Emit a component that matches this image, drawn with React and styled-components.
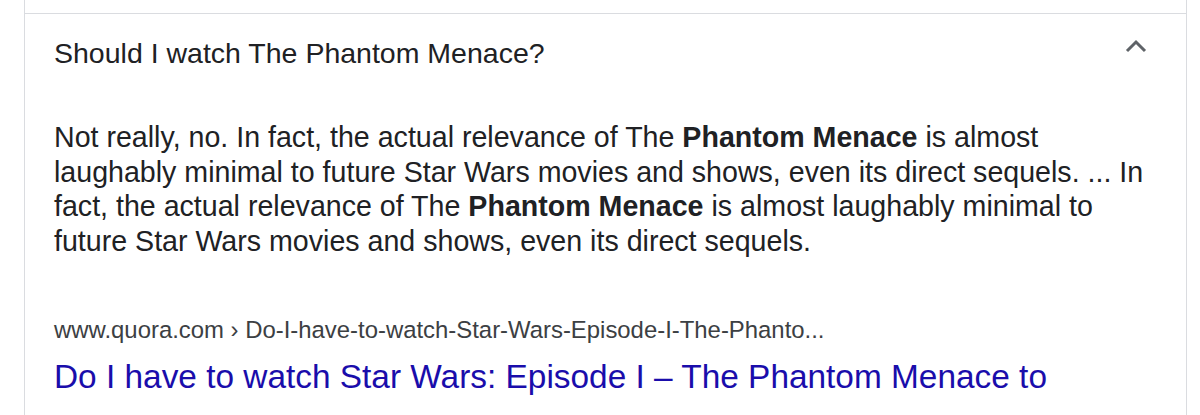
import React from 'react'
import styled, { createGlobalStyle } from 'styled-components'

const GlobalStyle = createGlobalStyle`
  body {
    margin: 0;
    background: #fff;
    font-family: 'Liberation Sans', Arial, sans-serif;
  }
`

function Chevron() {
  return (
    <ChevronIcon width="22" height="14" viewBox="0 0 22 14" aria-hidden="true">
      <polyline points="2,12 11,3 20,12" fill="none" stroke="#5f6368" strokeWidth="3" />
    </ChevronIcon>
  )
}

function App() {
  return (
    <Page>
      <GlobalStyle />
      <Card>
        <PrevItem />
        <Item>
          <QuestionRow>
            <Question>Should I watch The Phantom Menace?</Question>
            <Chevron />
          </QuestionRow>
          <Answer>
            Not really, no. In fact, the actual relevance of The <Strong>Phantom Menace</Strong> is almost
            laughably minimal to future Star Wars movies and shows, even its direct sequels. ... In
            fact, the actual relevance of The <Strong>Phantom Menace</Strong> is almost laughably minimal to
            future Star Wars movies and shows, even its direct sequels.
          </Answer>
          <Source>
            <Cite>www.quora.com › Do-I-have-to-watch-Star-Wars-Episode-I-The-Phanto...</Cite>
            <Title href="#">Do I have to watch Star Wars: Episode I – The Phantom Menace to</Title>
          </Source>
        </Item>
      </Card>
    </Page>
  )
}

const Page = styled.div`
  height: 415px;
  overflow: hidden;
  padding: 0 13px 0 24px;
`

const Card = styled.div`
  border-left: 1px solid #dadce0;
  border-right: 1px solid #dadce0;
  height: 100%;
`

const PrevItem = styled.div`
  height: 13px;
`

const Item = styled.div`
  border-top: 1px solid #dadce0;
`

const QuestionRow = styled.div`
  display: flex;
  justify-content: space-between;
  align-items: flex-start;
  padding: 23px 39px 0 29px;
`

const Question = styled.div`
  font-size: 28.5px;
  line-height: 32px;
  color: #202124;
`

const ChevronIcon = styled.svg`
  margin-top: 2px;
  flex-shrink: 0;
`

const Answer = styled.div`
  margin-top: 51px;
  padding: 0 35px 0 29px;
  font-size: 28.6px;
  line-height: 34.5px;
  color: #202124;
`

const Strong = styled.span`
  font-weight: bold;
`

const Source = styled.div`
  margin-top: 58px;
  padding: 0 29px;
  display: flex;
  flex-direction: column;
  gap: 13px;
`

const Cite = styled.div`
  font-size: 23.9px;
  line-height: 28px;
  color: #3c4043;
  white-space: nowrap;
`

const Title = styled.a`
  font-size: 33.4px;
  line-height: 40px;
  color: #1a0dab;
  text-decoration: none;
  white-space: nowrap;
`

export default App
